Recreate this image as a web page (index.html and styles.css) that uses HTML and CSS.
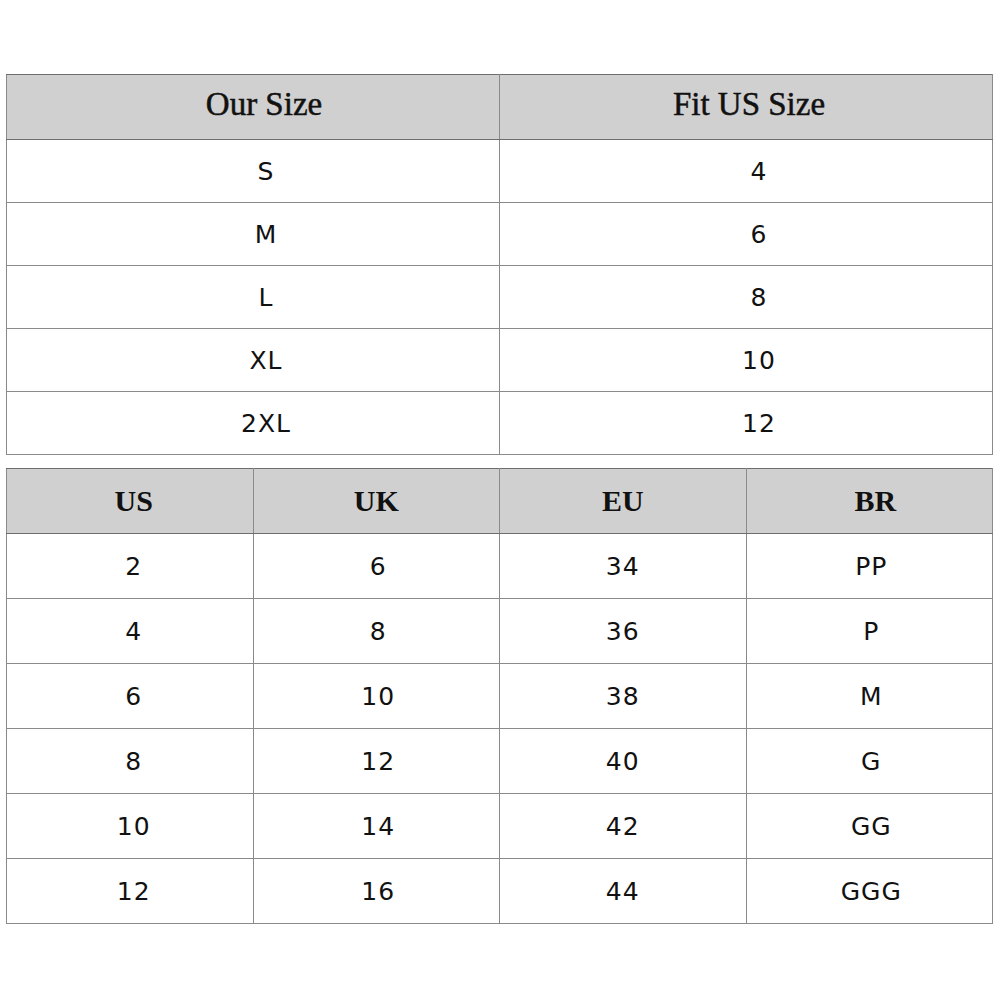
FILE: index.html
```html
<!DOCTYPE html>
<html>
<head>
<meta charset="utf-8">
<link rel="stylesheet" href="styles.css">
</head>
<body>
<div class="page">
  <table class="chart chart-two">
    <colgroup><col class="half"><col class="half"></colgroup>
    <thead>
      <tr class="head"><th>Our Size</th><th>Fit US Size</th></tr>
    </thead>
    <tbody>
      <tr class="row1"><td>S</td><td>4</td></tr>
      <tr class="row1"><td>M</td><td>6</td></tr>
      <tr class="row1"><td>L</td><td>8</td></tr>
      <tr class="row1"><td>XL</td><td>10</td></tr>
      <tr class="row1"><td>2XL</td><td>12</td></tr>
    </tbody>
  </table>
  <table class="chart chart-four">
    <colgroup><col class="quarter"><col class="quarter"><col class="quarter"><col class="quarter"></colgroup>
    <thead>
      <tr class="head bold"><th>US</th><th>UK</th><th>EU</th><th>BR</th></tr>
    </thead>
    <tbody>
      <tr class="row2"><td>2</td><td>6</td><td>34</td><td>PP</td></tr>
      <tr class="row2"><td>4</td><td>8</td><td>36</td><td>P</td></tr>
      <tr class="row2"><td>6</td><td>10</td><td>38</td><td>M</td></tr>
      <tr class="row2"><td>8</td><td>12</td><td>40</td><td>G</td></tr>
      <tr class="row2"><td>10</td><td>14</td><td>42</td><td>GG</td></tr>
      <tr class="row2"><td>12</td><td>16</td><td>44</td><td>GGG</td></tr>
    </tbody>
  </table>
</div>
</body>
</html>
```
FILE: styles.css
```css
html, body {
  margin: 0;
  padding: 0;
  background: #ffffff;
}
.page {
  padding: 74px 0 0 6px;
  display: flex;
  flex-direction: column;
  gap: 13px;
}
.chart {
  width: 987px;
  border-collapse: collapse;
  table-layout: fixed;
  color: #111111;
}
.half { width: 50%; }
.quarter { width: 25%; }
.chart th, .chart td {
  box-sizing: border-box;
  border: 1px solid #8a8a8a;
  text-align: center;
  vertical-align: middle;
  padding: 0;
}
.chart th {
  background: #d0d0d0;
  font-family: "Liberation Serif", "Times New Roman", serif;
  font-weight: normal;
  font-size: 33px;
  -webkit-text-stroke: 0.5px #111111;
  border-top-color: #6e6e6e;
  border-bottom-color: #6e6e6e;
}
.chart-two th { padding-bottom: 5px; }
.head.bold th {
  font-weight: bold;
  font-size: 30px;
  -webkit-text-stroke: 0;
}
.head { height: 65px; }
.chart td {
  font-family: "DejaVu Sans", "Noto Sans", sans-serif;
  font-size: 25px;
  letter-spacing: 1px;
}
.row1 { height: 63px; }
.row2 { height: 65px; }
.chart-two td { padding-left: 26px; }
.chart-two th:first-child { padding-left: 22px; }
.chart-two th:last-child { padding-left: 6px; }
.chart-four th:first-child, .chart-four td:first-child { padding-left: 8px; }
.chart-four th:last-child { padding-left: 12px; }
.chart-four td:nth-child(2) { padding-left: 4px; }
.chart-four td:last-child { padding-left: 4px; }
```
